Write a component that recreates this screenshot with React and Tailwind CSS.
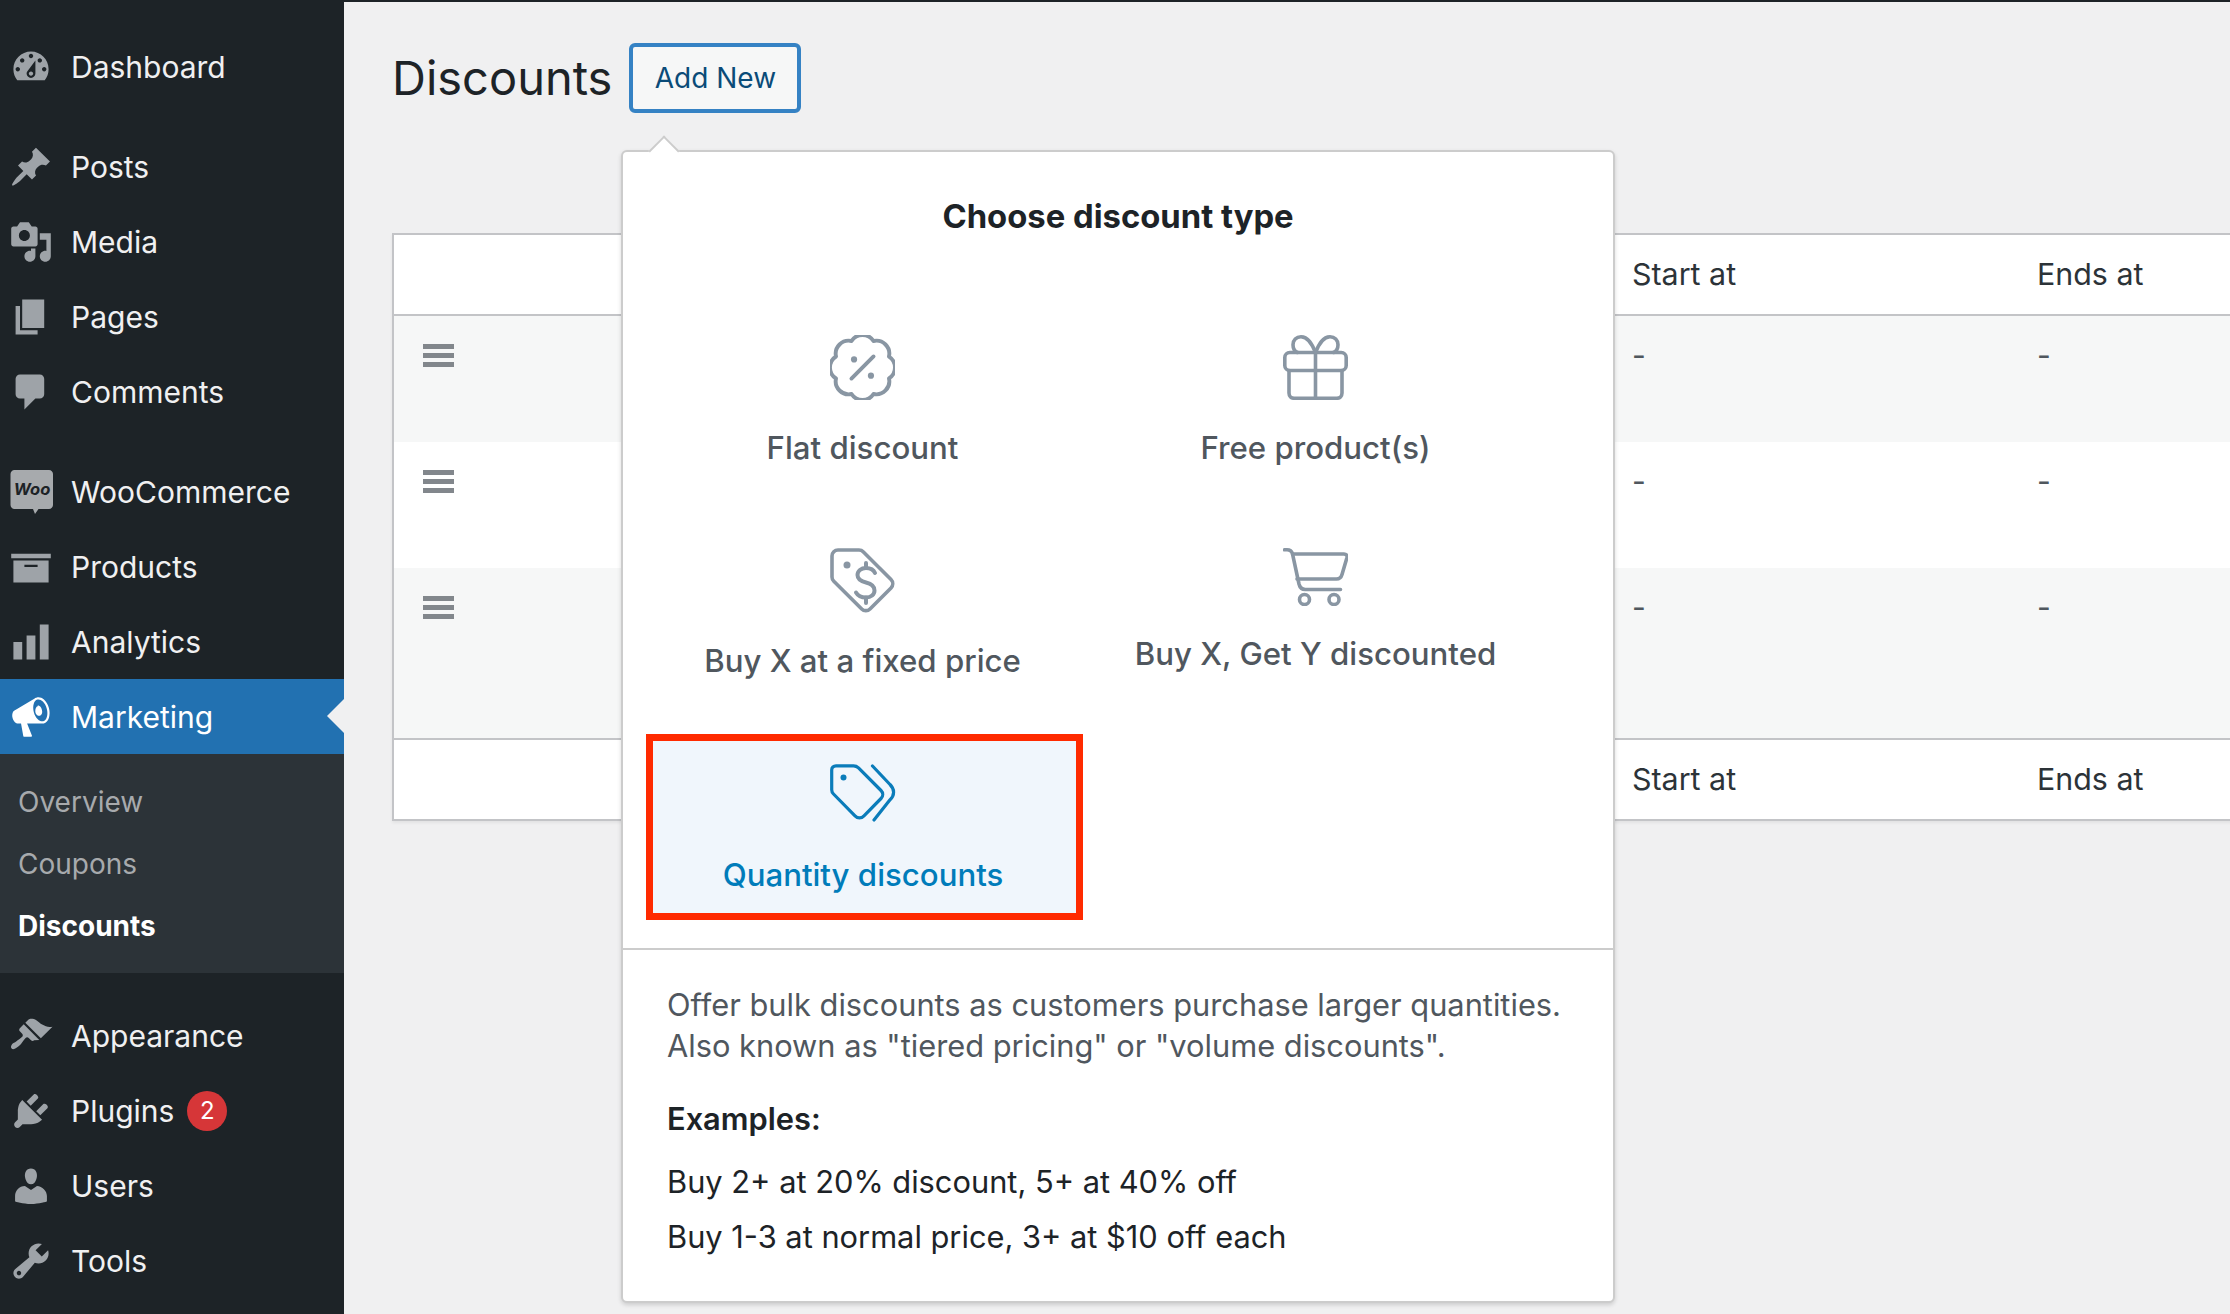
const PATHS = {
  dashboard: "M3.76 16h12.48c1.1-1.37 1.76-3.11 1.76-5 0-4.42-3.58-8-8-8s-8 3.58-8 8c0 1.89.66 3.63 1.76 5zM10 4c.55 0 1 .45 1 1s-.45 1-1 1-1-.45-1-1 .45-1 1-1zM6 6c.55 0 1 .45 1 1s-.45 1-1 1-1-.45-1-1 .45-1 1-1zm8 0c.55 0 1 .45 1 1s-.45 1-1 1-1-.45-1-1 .45-1 1-1zm-5.37 5.55L12 7v6c0 1.1-.9 2-2 2s-2-.9-2-2c0-.57.24-1.08.63-1.45zM4 10c.55 0 1 .45 1 1s-.45 1-1 1-1-.45-1-1 .45-1 1-1zm12 0c.55 0 1 .45 1 1s-.45 1-1 1-1-.45-1-1 .45-1 1-1zm-5 3c0-.55-.45-1-1-1s-1 .45-1 1 .45 1 1 1 1-.45 1-1z",
  pin: "M10.44 3.02l1.82-1.82 6.36 6.35-1.83 1.82c-1.05-.68-2.48-.57-3.41.36l-.75.75c-.92.93-1.04 2.35-.35 3.41l-1.83 1.82-2.41-2.41-2.8 2.79c-.42.42-3.38 2.71-3.8 2.29s1.86-3.39 2.28-3.81l2.79-2.79L4.1 9.36l1.83-1.82c1.05.69 2.48.57 3.4-.36l.75-.75c.93-.92 1.05-2.35.36-3.41z",
  media: "M13 11V4c0-.55-.45-1-1-1h-1.67L9 1H5L3.67 3H2c-.55 0-1 .45-1 1v7c0 .55.45 1 1 1h10c.55 0 1-.45 1-1zM7 4.5c1.38 0 2.5 1.12 2.5 2.5S8.38 9.5 7 9.5 4.5 8.38 4.5 7 5.62 4.5 7 4.5zM14 6h5v10.5c0 1.38-1.12 2.5-2.5 2.5S14 17.88 14 16.5s1.12-2.5 2.5-2.5c.17 0 .34.02.5.05V9h-3V6zm-4 8.05V13h2v3.5c0 1.38-1.12 2.5-2.5 2.5S7 17.88 7 16.5 8.12 14 9.5 14c.17 0 .34.02.5.05z",
  page: "M6 15V2h10v13H6zm-1 1h8v2H3V5h2v11z",
  comment: "M5 2h9c1.1 0 2 .9 2 2v7c0 1.1-.9 2-2 2h-2l-5 5v-5H5c-1.1 0-2-.9-2-2V4c0-1.1.9-2 2-2z",
  archive: "M19 4v2H1V4h18zM2 7h16v10H2V7zm11 3V9H7v1h6z",
  chart: "M18 18V2h-4v16h4zm-6 0V7H8v11h4zm-6 0v-8H2v8h4z",
  megaphone: "M18.15 5.94c.46 1.62.38 3.22-.02 4.48-.42 1.28-1.26 2.18-2.3 2.48-.16.06-.26.06-.4.06-.06.02-.12.02-.18.02-.06.02-.14.02-.22.02h-6.8l2.22 5.5c.02.14-.06.26-.14.34-.08.1-.24.16-.34.16H6.95c-.1 0-.26-.06-.34-.16-.08-.08-.16-.2-.14-.34l-1-5.5H4.25l-.02-.02c-.5.06-1.08-.18-1.54-.62s-.88-1.08-1.06-1.88c-.24-.8-.2-1.56-.02-2.2.18-.62.58-1.08 1.06-1.3l.02-.02 9-5.4c.1-.06.18-.1.24-.16.06-.04.14-.08.24-.12.16-.08.28-.12.5-.18 1.04-.3 2.24.1 3.22.98s1.84 2.24 2.26 3.86zm-2.58 5.98h-.02c.4-.1.74-.34 1.04-.7.58-.7.86-1.76.86-3.04 0-.64-.1-1.3-.28-1.98-.34-1.36-1.02-2.5-1.78-3.24s-1.68-1.1-2.46-.88c-.82.22-1.4.96-1.7 2-.32 1.04-.28 2.36.06 3.72.38 1.36 1 2.5 1.8 3.24.78.74 1.62 1.1 2.48.88zm-2.54-7.08c.22-.04.42-.02.62.04.38.16.76.48 1.02 1s.42 1.2.42 1.78c0 .3-.04.56-.12.8-.18.48-.44.8-.86.94-.44.14-.98-.02-1.44-.36-.1-.08-.2-.2-.28-.3-.28-.4-.44-.84-.44-1.28-.02-.64.06-1.16.26-1.56.2-.4.5-.66.82-.76z",
  appearance: "M14.48 11.06L7.41 3.99l1.5-1.5c.5-.56 2.3-.47 3.51.32 1.21.8 1.43 1.28 2.91 2.1 1.18.64 2.45 1.26 4.45.85zm-.71.71L6.7 4.7 4.93 6.47c-.39.39-.39 1.02 0 1.41l1.06 1.06c.39.39.39 1.03 0 1.42-.6.6-1.43 1.11-2.21 1.69-.35.26-.7.53-1.01.84C1.43 13.23.4 14.91 1.2 15.7c.79.8 2.47-.23 3.82-1.57.31-.31.58-.66.84-1.01.58-.78 1.09-1.61 1.69-2.21.39-.39 1.02-.39 1.41 0l1.06 1.06c.39.39 1.02.39 1.41 0z",
  plugin: "M13.11 4.36L9.87 7.6 8 5.73l3.24-3.24c.35-.34 1.05-.2 1.56.32.52.51.66 1.21.31 1.55zm-8 1.77l.91-1.12 9.01 9.01-1.19.84c-.71.71-2.63 1.16-3.82 1.16H6.14L4.9 17.26c-.59.59-1.54.59-2.12 0-.59-.58-.59-1.53 0-2.12l1.24-1.24v-3.88c0-1.13.4-3.19 1.09-3.89zm7.26 3.97l3.24-3.24c.34-.35 1.04-.21 1.55.31.52.51.66 1.21.31 1.55l-3.24 3.25z",
  users: "M10 9.25c-2.27 0-2.73-3.44-2.73-3.44C7 4.02 7.82 2 9.97 2c2.16 0 2.98 2.02 2.71 3.81 0 0-.41 3.44-2.68 3.44zm0 2.57L12.72 10c2.39 0 4.52 2.33 4.52 4.53v2.49s-3.65 1.13-7.24 1.13c-3.65 0-7.24-1.13-7.24-1.13v-2.49c0-2.25 1.94-4.48 4.47-4.48z",
  tools: "M16.68 9.77c-1.34 1.34-3.3 1.67-4.95.99l-5.41 6.52c-.99.99-2.59.99-3.58 0s-.99-2.59 0-3.57l6.52-5.42c-.68-1.65-.35-3.61.99-4.95 1.28-1.28 3.12-1.62 4.72-1.06l-2.89 2.89 2.82 2.82 2.86-2.87c.53 1.58.18 3.39-1.08 4.65zM3.81 16.21c.4.39 1.04.39 1.43 0 .4-.4.4-1.04 0-1.43-.39-.4-1.03-.4-1.43 0-.39.39-.39 1.03 0 1.43z",
};

function Dash({ name, active }) {
  return (
    <svg viewBox="0 0 20 20" className={"w-[44px] h-[44px] shrink-0 " + (active ? "fill-white" : "fill-[#9ea3a8]")}>
      <path d={PATHS[name]} fillRule="evenodd" />
    </svg>
  );
}

function WooIcon() {
  return (
    <svg viewBox="0 0 44 44" className="w-[44px] h-[44px] shrink-0">
      <path d="M5.500 0H40c2.200 0 4 1.800 4 4v31c0 2.200-1.800 4-4 4H29.500l-3.500 5-2-5H5.500c-2.200 0-4-1.800-4-4V4c0-2.200 1.800-4 4-4z" fill="#a7aaad" />
      <text x="23" y="25" textAnchor="middle" fontFamily="Inter, sans-serif" fontSize="16.500" fontWeight="700" fontStyle="italic" fill="#1d2327">Woo</text>
    </svg>
  );
}

function Item({ icon, label, active, badge, woo }) {
  return (
    <div className={"relative h-[75px] flex items-center pl-[9px] gap-[18px] text-[30px] " + (active ? "bg-[#2271b1] text-white" : "text-[#f0f0f1]")}>
      {woo ? <WooIcon /> : <Dash name={icon} active={active} />}
      <span className="mt-[2px]">{label}</span>
      {badge && (
        <span className="w-[40px] h-[40px] rounded-full bg-[#d63638] text-white text-[24px] flex items-center justify-center -ml-[5px]">{badge}</span>
      )}
      {active && (
        <span className="absolute right-0 top-[20px] w-0 h-0 border-y-[17px] border-y-transparent border-r-[17px] border-r-[#f0f0f1]" />
      )}
    </div>
  );
}

const stroke = { fill: "none", stroke: "#8996a3", strokeWidth: 3.6, strokeLinecap: "round", strokeLinejoin: "round" };

function FlatIcon() {
  return (
    <svg viewBox="2 2 20 20" className="w-[65px] h-[65px]" fill="none" stroke="#8996a3" strokeWidth="1.200" strokeLinecap="round" strokeLinejoin="round">
      <path d="M3.85 8.62a4 4 0 0 1 4.78-4.77 4 4 0 0 1 6.74 0 4 4 0 0 1 4.78 4.78 4 4 0 0 1 0 6.74 4 4 0 0 1-4.77 4.78 4 4 0 0 1-6.75 0 4 4 0 0 1-4.78-4.77 4 4 0 0 1 0-6.76Z" />
      <path d="M15.400 8.600l-6.800 6.800" />
      <circle cx="9.400" cy="9.500" r="0.950" fill="#8996a3" stroke="none" />
      <circle cx="14.600" cy="14.500" r="0.950" fill="#8996a3" stroke="none" />
    </svg>
  );
}
function GiftIcon() {
  return (
    <svg viewBox="0 0 65 65" className="w-[65px] h-[65px]" {...stroke}>
      <rect x="1.800" y="17.500" width="61.400" height="18" rx="5" />
      <path d="M6 35.500V58c0 3.300 2.200 5.300 5.300 5.300h42.400c3.100 0 5.300-2 5.300-5.300V35.500" />
      <path d="M32.500 17.500V63" />
      <path d="M32.500 17.500C29 9 25 1.800 18 1.800c-4.700 0-8 3.400-8 7.900 0 3.800 1.800 6.600 4.500 7.800" />
      <path d="M32.500 17.500C36 9 40 1.800 47 1.800c4.700 0 8 3.400 8 7.900 0 3.800-1.800 6.600-4.500 7.800" />
    </svg>
  );
}
function TagDollarIcon() {
  return (
    <svg viewBox="0 0 65 65" className="w-[65px] h-[65px]" {...stroke}>
      <path d="M8 2H29c1.600 0 3.100.6 4.200 1.800L61 31.600c2.300 2.300 2.300 6 0 8.300L40 60.900c-2.300 2.300-6 2.300-8.300 0L3.800 33.200C2.600 32 2 30.500 2 28.900V8c0-3.300 2.700-6 6-6z" />
      <circle cx="17" cy="17" r="3.500" fill="#8996a3" stroke="none" />
      <path d="M45 25C43.500 21.500 40 20 36 20c-5 0-8.500 3-8.500 7 0 4 3.500 6.300 8.500 7.500 5 1.200 8.500 3.500 8.500 8 0 4-3.500 7-8.500 7-4.500 0-8-1.500-10-5" strokeWidth="4" />
      <path d="M36 15v5M36 49.500V55" strokeWidth="4" />
    </svg>
  );
}
function CartIcon() {
  return (
    <svg viewBox="0 0 65 58" className="w-[65px] h-[58px]" {...stroke}>
      <path d="M1.500 1.800H4c3 0 4.700 1.300 5.500 4L16 36c.8 3.300 3 5.500 6.300 5.500H57.500" />
      <path d="M9.500 6H61c2.200 0 3.500 1.400 3 3.500L59 26.500c-.8 2.800-2.800 4.500-5.500 4.500H14" />
      <circle cx="21.500" cy="51.500" r="5" />
      <circle cx="51" cy="51.500" r="5" />
    </svg>
  );
}
function QtyIcon() {
  return (
    <svg viewBox="0 0 67 58" className="w-[67px] h-[58px]" fill="none" stroke="#0a7cba" strokeWidth="3.200" strokeLinecap="round" strokeLinejoin="round">
      <path d="M6 1.800H23.500c2 0 3.600.7 5 2L51 26.500c2.300 2.300 2.300 5.700 0 8L34 51.800c-2.700 2.800-6.300 2.800-9 0L3.500 30c-1.200-1.200-1.800-2.600-1.800-4.300V6c0-2.500 1.800-4.200 4.300-4.200z" />
      <circle cx="13.500" cy="13.500" r="3" fill="#0a7cba" stroke="none" />
      <path d="M42.500 2L60 20.500c4.800 4.800 4.800 10.500 0 15.300L44 56" />
    </svg>
  );
}

function TypeCell({ icon, label, selected, first }) {
  return (
    <div className={"h-[186px] flex flex-col items-center text-[31.2px] font-medium whitespace-nowrap " + (first ? "pr-[4px] " : "") + (selected ? "border-[7px] border-[#ff2a00] bg-[#f0f6fc] text-[#007cba] pt-[23px] pr-[3px]" : "pt-[27px] text-[#50575e]")}>
      {icon}
      <div className={selected ? "mt-[29px] leading-[48px]" : "mt-[24px] leading-[48px]"}>{label}</div>
    </div>
  );
}

function Handle() {
  return (
    <div className="flex flex-col gap-[4px] w-[31px]">
      <div className="h-[5px] bg-[#82878c]" />
      <div className="h-[5px] bg-[#82878c]" />
      <div className="h-[5px] bg-[#82878c]" />
    </div>
  );
}

function Row({ h, alt }) {
  return (
    <div className={"grid grid-cols-[1238px_405px_1fr] " + h + " " + (alt ? "bg-[#f6f7f7]" : "bg-white")}>
      <div className="pl-[29px] pt-[28px]"><Handle /></div>
      <div className="pt-[19px] text-[30px] leading-[40px] text-[#50575e]">-</div>
      <div className="pt-[19px] text-[30px] leading-[40px] text-[#50575e]">-</div>
    </div>
  );
}

function HeadRow({ border }) {
  return (
    <div className={"grid grid-cols-[1238px_405px_1fr] h-[81px] items-center bg-white text-[30.4px] text-[#2c3338] " + border}>
      <div />
      <div>Start at</div>
      <div>Ends at</div>
    </div>
  );
}

export default function App() {
  return (
    <div className="flex w-[2230px] h-[1314px] overflow-hidden bg-[#f0f0f1] font-['Inter',sans-serif]">
      <aside className="w-[344px] shrink-0 bg-[#1d2327] pt-[29px]">
        <Item icon="dashboard" label="Dashboard" />
        <div className="mt-[25px]">
          <Item icon="pin" label="Posts" />
          <Item icon="media" label="Media" />
          <Item icon="page" label="Pages" />
          <Item icon="comment" label="Comments" />
        </div>
        <div className="mt-[25px]">
          <Item woo label="WooCommerce" />
          <Item icon="archive" label="Products" />
          <Item icon="chart" label="Analytics" />
          <Item icon="megaphone" label="Marketing" active />
        </div>
        <div className="bg-[#2c3338] pt-[17px] pb-[16px] text-[28px] text-[#a7aaad]">
          <div className="h-[62px] flex items-center pl-[18px]">Overview</div>
          <div className="h-[62px] flex items-center pl-[18px]">Coupons</div>
          <div className="h-[62px] flex items-center pl-[18px] font-bold text-white">Discounts</div>
        </div>
        <div className="mt-[25px]">
          <Item icon="appearance" label="Appearance" />
          <Item icon="plugin" label="Plugins" badge="2" />
          <Item icon="users" label="Users" />
          <Item icon="tools" label="Tools" />
        </div>
      </aside>

      <main className="relative flex-1 border-t-2 border-[#1d2327] pl-[48px] overflow-hidden">
        <div className="flex items-center gap-[17px] pt-[41px] h-[111px]">
          <h1 className="text-[47px] text-[#1d2327] leading-none -mt-[2px]">Discounts</h1>
          <button className="w-[172px] h-[70px] rounded-[6px] border-[4px] border-[#3582c4] bg-[#f6f7f7] text-[#0a4b78] text-[28px]">Add New</button>
        </div>

        <div className="mt-[120px] w-[1900px] border-2 border-[#c3c4c7] shadow-[0_2px_3px_rgba(0,0,0,0.06)]">
          <HeadRow border="border-b-2 border-[#c3c4c7]" />
          <Row h="h-[126px]" alt />
          <Row h="h-[126px]" />
          <Row h="h-[170px]" alt />
          <HeadRow border="border-t-2 border-[#c3c4c7]" />
        </div>

        <div className="absolute left-[277px] top-[148px] w-[994px] h-[1153px] rounded-[6px] border-2 border-[#cccccc] bg-white shadow-[0_2px_4px_rgba(0,0,0,0.15)]">
          <div className="absolute left-[30px] -top-[12px] w-[22px] h-[22px] rotate-45 bg-white border-l-2 border-t-2 border-[#cccccc]" />
          <div className="relative h-[156px] flex items-start justify-center pt-[44px] text-[32.8px] leading-[40px] font-bold text-[#1d2327]">Choose discount type</div>
          <div className="relative grid grid-cols-[437px_437px] gap-x-[14px] gap-y-[27px] pl-[23px]">
            <TypeCell first icon={<FlatIcon />} label="Flat discount" />
            <TypeCell icon={<GiftIcon />} label="Free product(s)" />
            <TypeCell first icon={<TagDollarIcon />} label="Buy X at a fixed price" />
            <TypeCell icon={<CartIcon />} label="Buy X, Get Y discounted" />
            <TypeCell icon={<QtyIcon />} label="Quantity discounts" selected />
          </div>
          <div className="mt-[28px] border-t-2 border-[#cccccc] pl-[44px] pt-[34px] text-[30.8px]">
            <p className="text-[#50575e] leading-[41px] whitespace-nowrap">Offer bulk discounts as customers purchase larger quantities.<br />Also known as "tiered pricing" or "volume discounts".</p>
            <p className="mt-[32px] font-semibold text-[#1d2327] leading-[41px]">Examples:</p>
            <p className="mt-[22px] text-[#1d2327] leading-[41px]">Buy 2+ at 20% discount, 5+ at 40% off</p>
            <p className="mt-[14px] text-[#1d2327] leading-[41px]">Buy 1-3 at normal price, 3+ at $10 off each</p>
          </div>
        </div>
      </main>
    </div>
  );
}
